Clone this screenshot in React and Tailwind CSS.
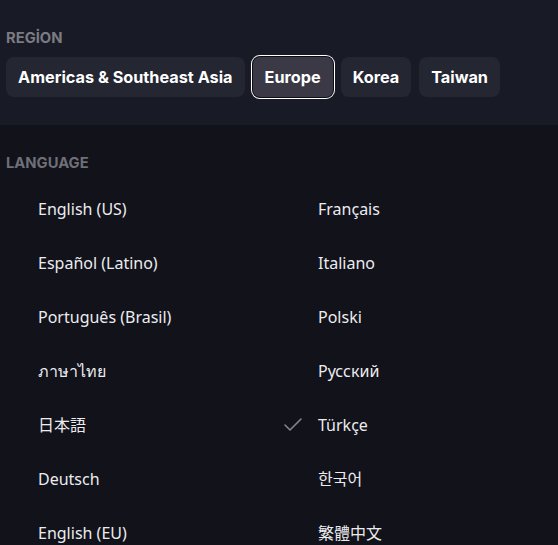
import { Check } from 'lucide-react'

const REGIONS = ['Americas & Southeast Asia', 'Europe', 'Korea', 'Taiwan']

const LANGS = [
  ['English (US)', 'Français'],
  ['Español (Latino)', 'Italiano'],
  ['Português (Brasil)', 'Polski'],
  ['ภาษาไทย', 'Русский'],
  ['日本語', 'Türkçe'],
  ['Deutsch', '한국어'],
  ['English (EU)', '繁體中文'],
]

const SELECTED_REGION = 'Europe'
const SELECTED_LANG = 'Türkçe'

function LangItem({ label }) {
  const active = label === SELECTED_LANG
  return (
    <div className="flex h-[54px] items-center">
      <span className="flex w-[38px] shrink-0 items-center pl-px">
        {active && <Check size={24} strokeWidth={1.6} className="text-[#85858c]" />}
      </span>
      <span className="text-[16px] text-[#ececef]">{label}</span>
    </div>
  )
}

export default function App() {
  return (
    <div
      className="h-[545px] w-[558px] overflow-hidden bg-[#11121a]"
      style={{ fontFamily: '"Noto Sans", "Noto Sans CJK JP", "Noto Sans CJK KR", "Noto Sans CJK TC", sans-serif' }}
    >
      <section className="h-[125px] bg-[#181a26] px-[6px] pt-[29px]">
        <h3 className="font-['Inter',sans-serif] text-[14.75px] font-bold leading-[18px] text-[#7b7b82]">REGİON</h3>
        <div className="mt-[10px] flex items-center gap-2">
          {REGIONS.map((r) =>
            r === SELECTED_REGION ? (
              <button
                key={r}
                className="h-[40px] rounded-[7px] bg-[#3a3945] px-3 font-['Inter',sans-serif] text-[16.25px] font-bold text-white ring-1 ring-white ring-offset-1 ring-offset-[#0d0e14]"
              >
                {r}
              </button>
            ) : (
              <button
                key={r}
                className="h-[40px] rounded-[8px] bg-[#242632] px-3 font-['Inter',sans-serif] text-[16.25px] font-bold text-white"
              >
                {r}
              </button>
            )
          )}
        </div>
      </section>

      <section className="px-[6px] pt-[29px]">
        <h3 className="font-['Inter',sans-serif] text-[14.75px] font-bold leading-[18px] text-[#6f6f77]">LANGUAGE</h3>
        <div className="-mx-[6px] mt-[10px] grid grid-cols-[280px_278px]">
          {LANGS.map(([a, b]) => (
            <div key={a} className="contents">
              <LangItem label={a} />
              <LangItem label={b} />
            </div>
          ))}
        </div>
      </section>
    </div>
  )
}
